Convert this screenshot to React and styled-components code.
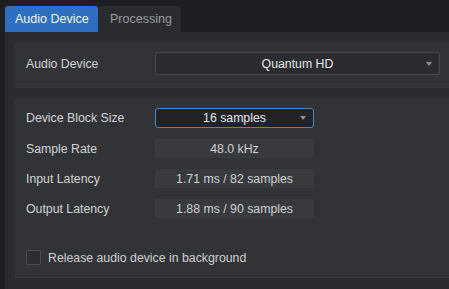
import React from "react";
import styled, { createGlobalStyle } from "styled-components";

const GlobalStyle = createGlobalStyle`
  html, body {
    margin: 0;
    padding: 0;
    background: #1e1f22;
    font-family: "Liberation Sans", Arial, sans-serif;
    font-size: 12.3px;
  }
`;

const Window = styled.div`
  width: 449px;
  height: 289px;
  padding: 6px 0 0 5px;
  box-sizing: border-box;
  display: flex;
  flex-direction: column;
  overflow: hidden;
`;

const TabBar = styled.div`
  display: flex;
  height: 26px;
`;

const Tab = styled.div`
  display: flex;
  align-items: center;
  padding: 0 0 0 ${(p) => (p.$active ? 10 : 12)}px;
  width: ${(p) => p.$width}px;
  box-sizing: border-box;
  white-space: nowrap;
  background: ${(p) => (p.$active ? "#2f6fbf" : "#2a2b2e")};
  color: ${(p) => (p.$active ? "#f2f4f8" : "#9b9c9f")};
  border-radius: 3px 3px 0 0;
  font-size: 12.5px;
`;

const Panel = styled.div`
  flex: 1;
  background: #2a2b2e;
  padding: 10px 0 0 10px;
  display: flex;
  flex-direction: column;
  gap: 10px;
`;

const Group = styled.div`
  background: #323337;
  padding: ${(p) => p.$pad};
  display: flex;
  flex-direction: column;
  gap: ${(p) => p.$gap || 0}px;
  height: ${(p) => p.$height}px;
  box-sizing: border-box;
  border-bottom: 1px solid #37383c;
`;

const Row = styled.div`
  display: flex;
  align-items: center;
  height: ${(p) => p.$h || 20}px;
`;

const Label = styled.div`
  width: 129px;
  color: #d2d3d5;
`;

const Select = styled.div`
  position: relative;
  width: ${(p) => p.$w}px;
  height: ${(p) => p.$h}px;
  box-sizing: border-box;
  border: 1px solid ${(p) => (p.$focus ? "#4d83c6" : "#4a4b50")};
  background: ${(p) => (p.$focus ? "#222326" : "#2b2c30")};
  border-radius: 3px;
  display: flex;
  align-items: center;
  justify-content: center;
  color: #e6e7e9;
`;

const Arrow = styled.span`
  position: absolute;
  right: 7px;
  top: 50%;
  margin-top: -2px;
  width: 0;
  height: 0;
  border-left: 3.5px solid transparent;
  border-right: 3.5px solid transparent;
  border-top: 4px solid #909195;
`;

const Field = styled.div`
  width: 159px;
  height: 19px;
  background: #393a3e;
  border-radius: 2px;
  display: flex;
  align-items: center;
  justify-content: center;
  color: #cfd0d3;
`;

const CheckRow = styled.div`
  display: flex;
  align-items: center;
  gap: 7px;
  margin-top: 21px;
  color: #cfd0d3;
`;

const Box = styled.span`
  width: 15px;
  height: 15px;
  box-sizing: border-box;
  border: 1px solid #4b4c51;
  border-radius: 2px;
  background: #2c2d31;
`;

export default function App() {
  return (
    <>
      <GlobalStyle />
      <Window>
        <TabBar>
          <Tab $active $width={93}>Audio Device</Tab>
          <Tab $width={83}>Processing</Tab>
        </TabBar>
        <Panel>
          <Group $pad="10px 9px 0 11px" $height={46}>
            <Row $h={23}>
              <Label>Audio Device</Label>
              <Select $w={285} $h={23}>
                Quantum HD
                <Arrow />
              </Select>
            </Row>
          </Group>
          <Group $pad="10px 0 0 11px" $gap={11} $height={180}>
            <Row>
              <Label>Device Block Size</Label>
              <Select $w={159} $h={20} $focus>
                16 samples
                <Arrow />
              </Select>
            </Row>
            <Row $h={19}>
              <Label>Sample Rate</Label>
              <Field>48.0 kHz</Field>
            </Row>
            <Row $h={19}>
              <Label>Input Latency</Label>
              <Field>1.71 ms / 82 samples</Field>
            </Row>
            <Row $h={19}>
              <Label>Output Latency</Label>
              <Field>1.88 ms / 90 samples</Field>
            </Row>
            <CheckRow>
              <Box />
              Release audio device in background
            </CheckRow>
          </Group>
        </Panel>
      </Window>
    </>
  );
}
